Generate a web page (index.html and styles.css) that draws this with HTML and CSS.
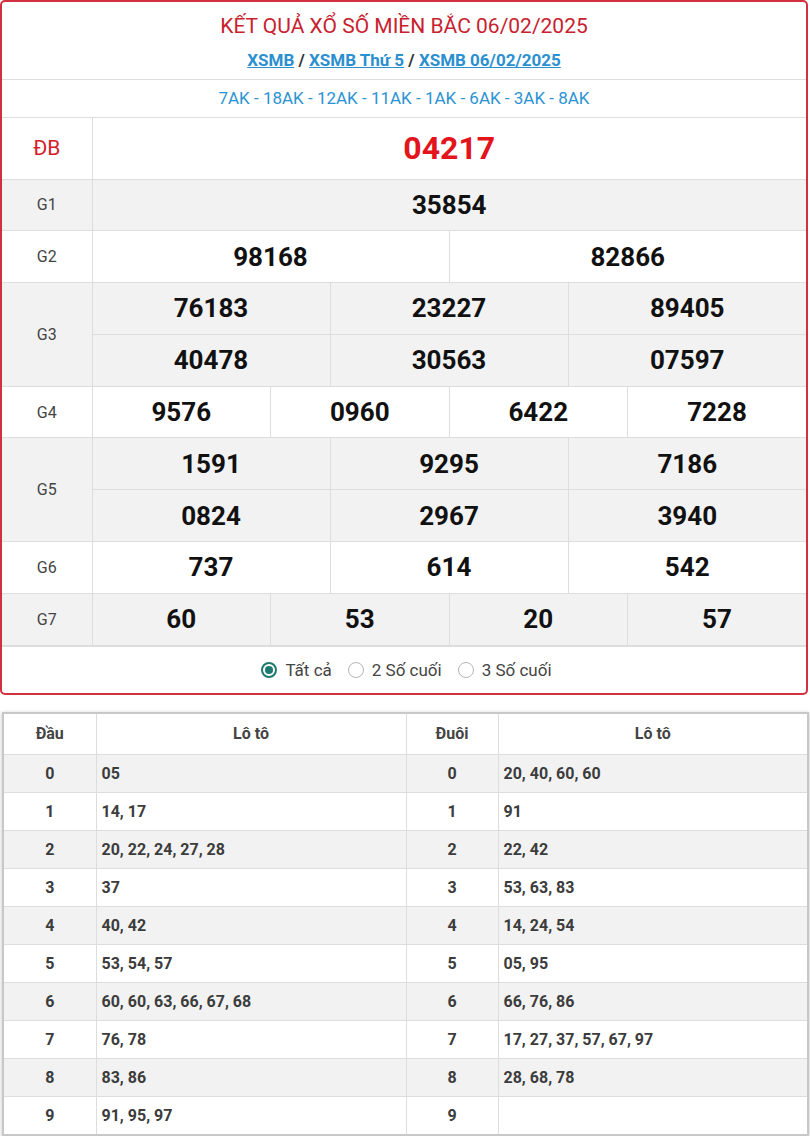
FILE: index.html
```html
<!DOCTYPE html>
<html lang="vi">
<head>
<meta charset="utf-8">
<title>XSMB 06/02/2025</title>
<link rel="stylesheet" href="styles.css">
</head>
<body>
<div class="card">
  <div class="head">
    <h1 class="title">KẾT QUẢ XỔ SỐ MIỀN BẮC 06/02/2025</h1>
    <div class="crumbs"><a href="#">XSMB</a> / <a href="#">XSMB Thứ 5</a> / <a href="#">XSMB 06/02/2025</a></div>
  </div>
  <div class="codes">7AK - 18AK - 12AK - 11AK - 1AK - 6AK - 3AK - 8AK</div>
  <table class="prize">
    <colgroup>
      <col class="c-label">
      <col><col><col><col><col><col><col><col><col><col><col><col>
    </colgroup>
    <tr class="db">
      <td class="lbl lbl-db">ĐB</td>
      <td colspan="12" class="num num-db">04217</td>
    </tr>
    <tr class="gray">
      <td class="lbl">G1</td>
      <td colspan="12" class="num">35854</td>
    </tr>
    <tr>
      <td class="lbl">G2</td>
      <td colspan="6" class="num">98168</td>
      <td colspan="6" class="num">82866</td>
    </tr>
    <tr class="gray">
      <td class="lbl" rowspan="2">G3</td>
      <td colspan="4" class="num">76183</td>
      <td colspan="4" class="num">23227</td>
      <td colspan="4" class="num">89405</td>
    </tr>
    <tr class="gray">
      <td colspan="4" class="num">40478</td>
      <td colspan="4" class="num">30563</td>
      <td colspan="4" class="num">07597</td>
    </tr>
    <tr>
      <td class="lbl">G4</td>
      <td colspan="3" class="num">9576</td>
      <td colspan="3" class="num">0960</td>
      <td colspan="3" class="num">6422</td>
      <td colspan="3" class="num">7228</td>
    </tr>
    <tr class="gray">
      <td class="lbl" rowspan="2">G5</td>
      <td colspan="4" class="num">1591</td>
      <td colspan="4" class="num">9295</td>
      <td colspan="4" class="num">7186</td>
    </tr>
    <tr class="gray">
      <td colspan="4" class="num">0824</td>
      <td colspan="4" class="num">2967</td>
      <td colspan="4" class="num">3940</td>
    </tr>
    <tr>
      <td class="lbl">G6</td>
      <td colspan="4" class="num">737</td>
      <td colspan="4" class="num">614</td>
      <td colspan="4" class="num">542</td>
    </tr>
    <tr class="gray">
      <td class="lbl">G7</td>
      <td colspan="3" class="num">60</td>
      <td colspan="3" class="num">53</td>
      <td colspan="3" class="num">20</td>
      <td colspan="3" class="num">57</td>
    </tr>
  </table>
  <div class="filters">
    <label class="opt"><span class="radio checked"></span>Tất cả</label>
    <label class="opt"><span class="radio"></span>2 Số cuối</label>
    <label class="opt"><span class="radio"></span>3 Số cuối</label>
  </div>
</div>

<table class="loto">
  <colgroup>
    <col class="c1"><col class="c2"><col class="c3"><col class="c4">
  </colgroup>
  <thead>
    <tr><th>Đầu</th><th>Lô tô</th><th>Đuôi</th><th>Lô tô</th></tr>
  </thead>
  <tbody>
    <tr><td class="d">0</td><td>05</td><td class="d">0</td><td>20, 40, 60, 60</td></tr>
    <tr><td class="d">1</td><td>14, 17</td><td class="d">1</td><td>91</td></tr>
    <tr><td class="d">2</td><td>20, 22, 24, 27, 28</td><td class="d">2</td><td>22, 42</td></tr>
    <tr><td class="d">3</td><td>37</td><td class="d">3</td><td>53, 63, 83</td></tr>
    <tr><td class="d">4</td><td>40, 42</td><td class="d">4</td><td>14, 24, 54</td></tr>
    <tr><td class="d">5</td><td>53, 54, 57</td><td class="d">5</td><td>05, 95</td></tr>
    <tr><td class="d">6</td><td>60, 60, 63, 66, 67, 68</td><td class="d">6</td><td>66, 76, 86</td></tr>
    <tr><td class="d">7</td><td>76, 78</td><td class="d">7</td><td>17, 27, 37, 57, 67, 97</td></tr>
    <tr><td class="d">8</td><td>83, 86</td><td class="d">8</td><td>28, 68, 78</td></tr>
    <tr><td class="d">9</td><td>91, 95, 97</td><td class="d">9</td><td></td></tr>
  </tbody>
</table>
</body>
</html>
```

FILE: styles.css
```css
* { box-sizing: border-box; }

body {
  margin: 0;
  background: #fff;
  font-family: Roboto, "Liberation Sans", Arial, sans-serif;
  color: #333;
}

.card {
  width: 808px;
  border: 2px solid #d2303f;
  border-radius: 5px;
  background: #fff;
  overflow: hidden;
}

.head {
  height: 78px;
  border-bottom: 1px solid #ddd;
  text-align: center;
  padding-top: 11px;
}

.title {
  margin: 0;
  font-size: 21px;
  line-height: 26px;
  font-weight: 400;
  color: #c8222f;
}

.crumbs {
  margin-top: 10px;
  font-size: 17px;
  line-height: 22px;
  font-weight: 700;
  color: #333;
}

.crumbs a {
  color: #2b8fd0;
  text-decoration: underline;
}

.codes {
  height: 38px;
  border-bottom: 1px solid #ddd;
  text-align: center;
  font-size: 17px;
  line-height: 37px;
  color: #2b93d3;
}

.prize {
  width: 804px;
  table-layout: fixed;
  border-collapse: collapse;
}

.prize .c-label { width: 90px; }

.prize td {
  border: 1px solid #ddd;
  text-align: center;
  padding: 0;
  height: 51.8px;
}

.prize tr:first-child td { border-top: none; }
.prize td:first-child { border-left: none; }
.prize td:last-child { border-right: none; }

.prize tr.db td { height: 61px; }

.prize tr.gray td { background: #f2f2f2; }

.lbl {
  font-size: 16px;
  color: #444;
}

.lbl-db {
  font-size: 21px;
  color: #d4202b;
}

.num {
  font-size: 26px;
  font-weight: 700;
  color: #111;
}

.num-db {
  font-size: 32px;
  color: #e3141b;
}

.filters {
  height: 47px;
  border-top: 1px solid #ddd;
  display: flex;
  justify-content: center;
  align-items: center;
  gap: 16px;
  padding-left: 5px;
}

.opt {
  display: flex;
  align-items: center;
  gap: 8px;
  font-size: 17px;
  color: #444;
}

.radio {
  width: 16px;
  height: 16px;
  border-radius: 50%;
  border: 1.5px solid #b5b5b5;
  background: #fff;
  position: relative;
}

.radio.checked {
  border: 2px solid #1c7a70;
}

.radio.checked::after {
  content: "";
  position: absolute;
  left: 2px;
  top: 2px;
  width: 8px;
  height: 8px;
  border-radius: 50%;
  background: #1c7a70;
}

.loto {
  margin: 17px 0 0 2px;
  width: 805px;
  table-layout: fixed;
  border-collapse: collapse;
  border: 2px solid #c8c8c8;
  box-shadow: 0 1px 4px rgba(0, 0, 0, 0.25);
}

.loto .c1 { width: 93px; }
.loto .c2 { width: 310px; }
.loto .c3 { width: 92px; }
.loto .c4 { width: 310px; }

.loto th,
.loto td {
  border: 1px solid #ddd;
  font-size: 16px;
  font-weight: 700;
  color: #3c3c3c;
  padding: 0 5px;
}

.loto th {
  height: 42px;
  text-align: center;
  color: #444;
}

.loto td {
  height: 38px;
  text-align: left;
}

.loto td.d { text-align: center; }

.loto tbody tr:nth-child(odd) td { background: #f2f2f2; }
```
